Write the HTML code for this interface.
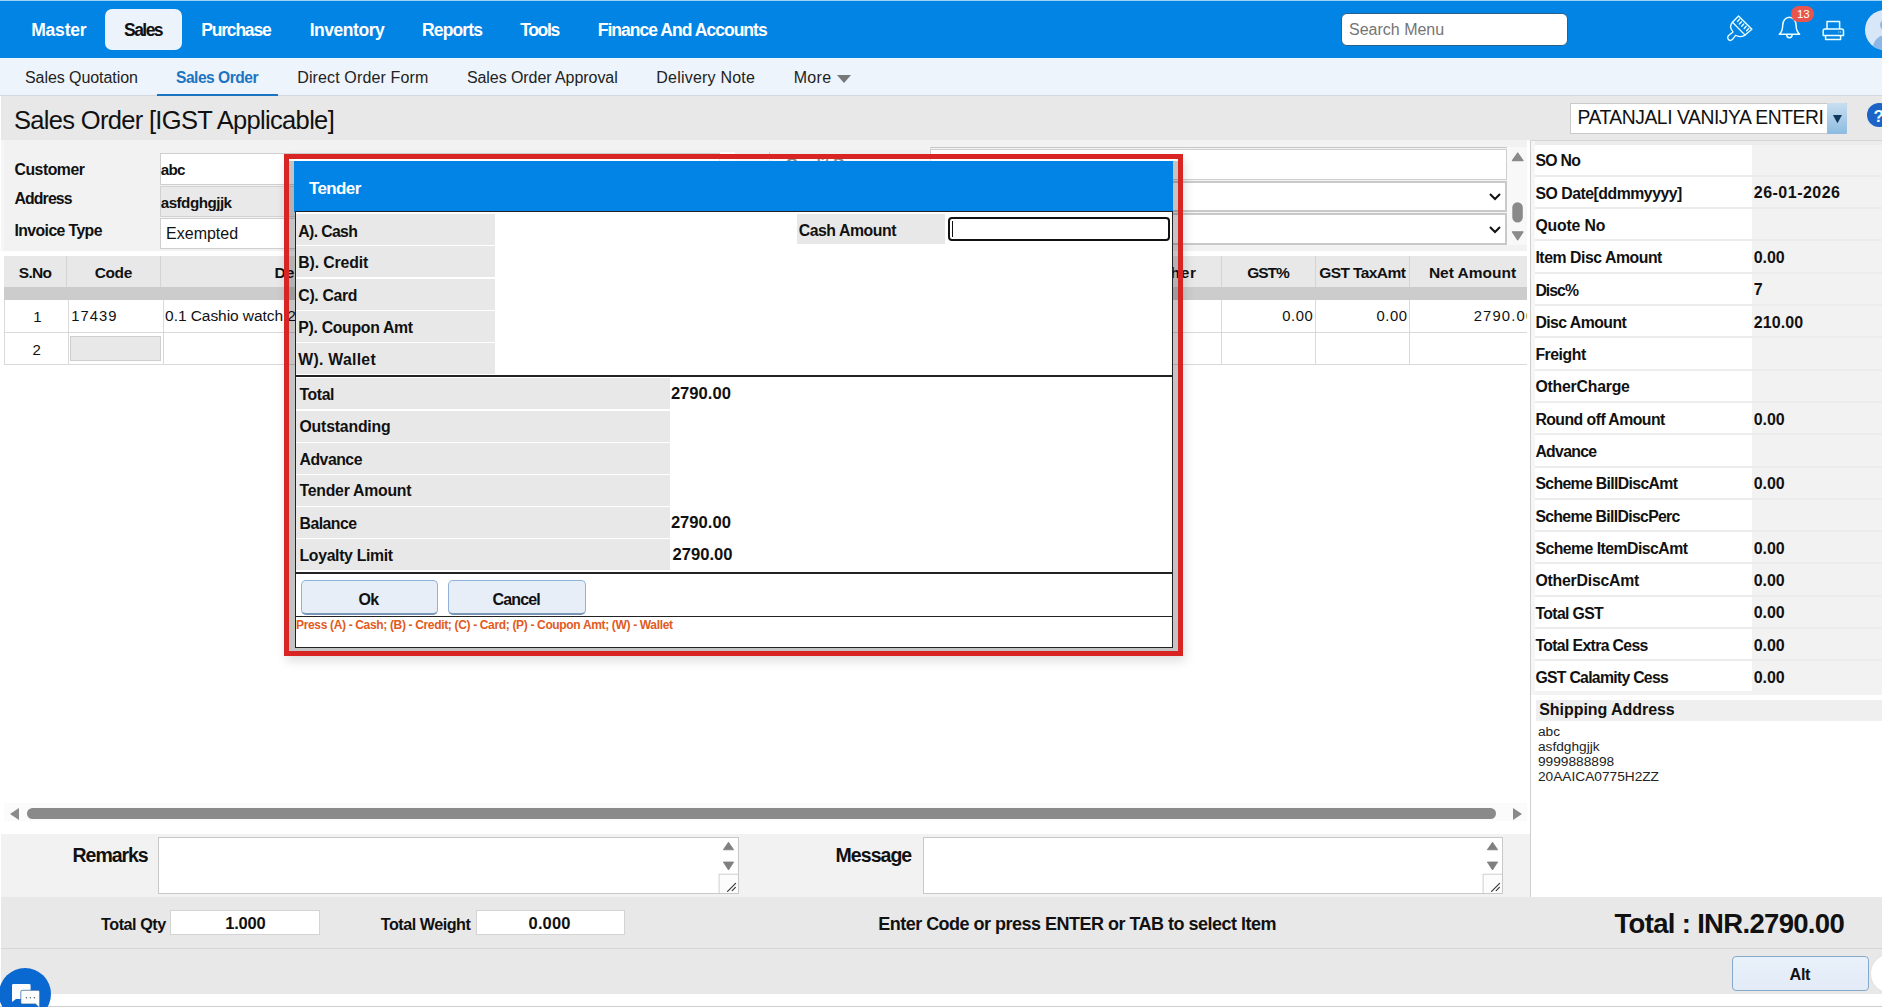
<!DOCTYPE html>
<html><head><meta charset="utf-8"><title>Sales Order</title>
<style>
html,body{margin:0;padding:0;width:1882px;height:1007px;overflow:hidden;background:#fff;}
body{position:relative;font-family:"Liberation Sans", sans-serif;}
.r{position:absolute;}
.t{position:absolute;line-height:1;white-space:nowrap;}
</style></head><body>
<div class="r" style="left:0px;top:0px;width:1882px;height:1007px;background:#ffffff;"></div>
<div class="r" style="left:0px;top:0px;width:1882px;height:1px;background:#9fd3f5;"></div>
<div class="r" style="left:0px;top:1px;width:1882px;height:57px;background:#0284e5;"></div>
<div class="r" style="left:105px;top:9px;width:77px;height:41px;background:#edf3fa;border-radius:7px;"></div>
<div class="t" style="left:31.20px;top:22.48px;font-size:17.5px;font-weight:bold;color:#ffffff;letter-spacing:-0.188px;">Master</div>
<div class="t" style="left:124.10px;top:22.48px;font-size:17.5px;font-weight:bold;color:#111;letter-spacing:-1.566px;">Sales</div>
<div class="t" style="left:201.30px;top:22.48px;font-size:17.5px;font-weight:bold;color:#ffffff;letter-spacing:-1.205px;">Purchase</div>
<div class="t" style="left:309.70px;top:22.48px;font-size:17.5px;font-weight:bold;color:#ffffff;letter-spacing:-0.469px;">Inventory</div>
<div class="t" style="left:422.00px;top:22.48px;font-size:17.5px;font-weight:bold;color:#ffffff;letter-spacing:-0.858px;">Reports</div>
<div class="t" style="left:520.20px;top:22.48px;font-size:17.5px;font-weight:bold;color:#ffffff;letter-spacing:-1.331px;">Tools</div>
<div class="t" style="left:597.70px;top:22.48px;font-size:17.5px;font-weight:bold;color:#ffffff;letter-spacing:-0.963px;">Finance And Accounts</div>
<div class="r" style="left:1341px;top:12.5px;width:227px;height:33.5px;background:#ffffff;border-radius:6px;box-sizing:border-box;border:1px solid #2a5f8a;"></div>
<div class="t" style="left:1349.00px;top:22.05px;font-size:16px;color:#757575;">Search Menu</div>
<div class="r" style="left:0px;top:58px;width:1882px;height:37px;background:#edf4fb;"></div>
<div class="r" style="left:0px;top:95px;width:1882px;height:1px;background:#d3d9de;"></div>
<div class="t" style="left:25.00px;top:69.85px;font-size:16px;color:#222;letter-spacing:-0.067px;">Sales Quotation</div>
<div class="t" style="left:176.00px;top:70.19px;font-size:15.6px;font-weight:bold;color:#1c74c2;letter-spacing:-0.509px;font-weight:600;">Sales Order</div>
<div class="t" style="left:297.20px;top:69.85px;font-size:16px;color:#222;letter-spacing:0.133px;">Direct Order Form</div>
<div class="t" style="left:466.90px;top:69.85px;font-size:16px;color:#222;letter-spacing:-0.067px;">Sales Order Approval</div>
<div class="t" style="left:656.30px;top:69.85px;font-size:16px;color:#222;letter-spacing:0.208px;">Delivery Note</div>
<div class="t" style="left:793.70px;top:69.85px;font-size:16px;color:#222;letter-spacing:0.307px;">More</div>
<div class="r" style="left:157px;top:93.5px;width:121px;height:2.5px;background:#1b74c2;"></div>
<svg class="r" style="left:836px;top:74px;width:16px;height:10px" viewBox="0 0 16 10"><path d="M1 1 L15 1 L8 9 Z" fill="#777"/></svg>
<div class="r" style="left:1px;top:96px;width:1881px;height:44px;background:#e8e8e8;"></div>
<div class="t" style="left:13.90px;top:107.50px;font-size:25.5px;color:#111;letter-spacing:-0.674px;">Sales Order [IGST Applicable]</div>
<div class="r" style="left:1570px;top:103px;width:277px;height:31px;background:#ffffff;box-sizing:border-box;border:1px solid #c9c9c9;"></div>
<div class="t" style="left:1577.40px;top:108.25px;font-size:19.3px;color:#111;letter-spacing:-0.434px;">PATANJALI VANIJYA ENTERI</div>
<div class="r" style="left:1827.4px;top:103px;width:19.2px;height:30.6px;background:linear-gradient(#c8def0,#8dbbe0);border-radius:0 2px 2px 0;"></div>
<svg class="r" style="left:1832px;top:114px;width:11px;height:10px" viewBox="0 0 11 10"><path d="M0.9 1 L10 1 L5.45 9.3 Z" fill="#0f3a5e"/></svg>
<div class="r" style="left:1867.2px;top:102.6px;width:24.4px;height:24.4px;border-radius:50%;background:#1b63c6;"></div>
<div class="t" style="left:1873.50px;top:107.60px;font-size:17px;font-weight:bold;color:#eaffff;">?</div>
<div class="r" style="left:1px;top:140px;width:1529px;height:757px;background:#ffffff;"></div>
<div class="r" style="left:1px;top:140px;width:4px;height:111px;background:#f6f6f6;"></div>
<div class="r" style="left:4px;top:140px;width:1523px;height:111px;background:#f2f2f2;"></div>
<div class="t" style="left:14.50px;top:161.82px;font-size:15.8px;font-weight:bold;color:#111;letter-spacing:-0.484px;">Customer</div>
<div class="t" style="left:14.50px;top:191.02px;font-size:15.8px;font-weight:bold;color:#111;letter-spacing:-0.867px;">Address</div>
<div class="t" style="left:14.50px;top:222.52px;font-size:15.8px;font-weight:bold;color:#111;letter-spacing:-0.597px;">Invoice Type</div>
<div class="r" style="left:160px;top:153px;width:560px;height:32px;background:#ffffff;box-sizing:border-box;border:1px solid #cfcfcf;"></div>
<div class="r" style="left:160px;top:186px;width:560px;height:31px;background:#e9e9e9;box-sizing:border-box;border:1px solid #d2d2d2;"></div>
<div class="r" style="left:160px;top:218px;width:560px;height:31px;background:#ffffff;box-sizing:border-box;border:1px solid #cfcfcf;"></div>
<div class="t" style="left:160.70px;top:161.93px;font-size:15.2px;font-weight:bold;color:#111;letter-spacing:-0.71px;">abc</div>
<div class="t" style="left:160.70px;top:194.63px;font-size:15.2px;font-weight:bold;color:#111;letter-spacing:-0.508px;">asfdghgjjk</div>
<div class="t" style="left:166.10px;top:225.55px;font-size:16px;color:#111;letter-spacing:-0.011px;">Exempted</div>
<div class="r" style="left:720px;top:152px;width:15px;height:96px;background:#ffffff;"></div>
<div class="r" style="left:769px;top:152px;width:1px;height:96px;background:#d0d0d0;"></div>
<div class="t" style="left:786.00px;top:157.12px;font-size:15.8px;font-weight:bold;color:#111;letter-spacing:-0.385px;">Credit Days</div>
<div class="t" style="left:932.50px;top:157.45px;font-size:16px;color:#111;">0</div>
<div class="r" style="left:930px;top:146.5px;width:577px;height:1.5px;background:#c8c8c8;"></div>
<div class="r" style="left:930px;top:148.5px;width:577px;height:31.5px;background:#ffffff;box-sizing:border-box;border:1px solid #cfcfcf;"></div>
<div class="r" style="left:930px;top:181px;width:577px;height:31px;background:#ffffff;box-sizing:border-box;border:2px solid #c9c9c9;"></div>
<div class="r" style="left:930px;top:212.8px;width:577px;height:32px;background:#ffffff;box-sizing:border-box;border:2px solid #c9c9c9;"></div>
<svg class="r" style="left:1488px;top:192px;width:14px;height:10px" viewBox="0 0 14 10"><path d="M2 2 L7 7 L12 2" fill="none" stroke="#111" stroke-width="2"/></svg>
<svg class="r" style="left:1488px;top:225px;width:14px;height:10px" viewBox="0 0 14 10"><path d="M2 2 L7 7 L12 2" fill="none" stroke="#111" stroke-width="2"/></svg>
<div class="r" style="left:1507px;top:147px;width:20px;height:98px;background:#f8f8f8;"></div>
<svg class="r" style="left:1510px;top:150px;width:16px;height:97px" viewBox="0 0 16 97"><path d="M2.4 10.6 L13 10.6 L7.7 3 Z" fill="#8a8a8a" stroke="#8a8a8a" stroke-width="1.2" stroke-linejoin="round"/><rect x="2.3" y="52.2" width="10.5" height="20.2" rx="5.2" fill="#8a8a8a"/><path d="M2.4 81.8 L13 81.8 L7.7 89.8 Z" fill="#8a8a8a" stroke="#8a8a8a" stroke-width="1.2" stroke-linejoin="round"/></svg>
<div class="r" style="left:4px;top:256px;width:1523px;height:31px;background:#e8e8e8;"></div>
<div class="r" style="left:4px;top:287px;width:1523px;height:13px;background:#cccccc;"></div>
<div class="r" style="left:66px;top:256px;width:1px;height:31px;background:#d4d4d4;"></div>
<div class="r" style="left:160px;top:256px;width:1px;height:31px;background:#d4d4d4;"></div>
<div class="r" style="left:1221px;top:256px;width:1px;height:31px;background:#d4d4d4;"></div>
<div class="r" style="left:1315px;top:256px;width:1px;height:31px;background:#d4d4d4;"></div>
<div class="r" style="left:1409px;top:256px;width:1px;height:31px;background:#d4d4d4;"></div>
<div class="r" style="left:4px;top:300px;width:1523px;height:64px;background:#ffffff;"></div>
<div class="r" style="left:4px;top:332px;width:1523px;height:1px;background:#d9d9d9;"></div>
<div class="r" style="left:4px;top:364px;width:1523px;height:1px;background:#d9d9d9;"></div>
<div class="r" style="left:4px;top:300px;width:1px;height:65px;background:#d9d9d9;"></div>
<div class="r" style="left:68px;top:300px;width:1px;height:64px;background:#d9d9d9;"></div>
<div class="r" style="left:163px;top:300px;width:1px;height:64px;background:#d9d9d9;"></div>
<div class="r" style="left:1221px;top:300px;width:1px;height:64px;background:#d9d9d9;"></div>
<div class="r" style="left:1315px;top:300px;width:1px;height:64px;background:#d9d9d9;"></div>
<div class="r" style="left:1409px;top:300px;width:1px;height:64px;background:#d9d9d9;"></div>
<div class="t" style="left:18.80px;top:264.87px;font-size:15.5px;font-weight:bold;color:#111;letter-spacing:-0.713px;">S.No</div>
<div class="t" style="left:94.80px;top:264.87px;font-size:15.5px;font-weight:bold;color:#111;letter-spacing:-0.417px;">Code</div>
<div class="t" style="left:274.40px;top:264.87px;font-size:15.5px;font-weight:bold;color:#111;letter-spacing:0.275px;">Description</div>
<div class="t" style="left:1152.00px;top:264.87px;font-size:15.5px;font-weight:bold;color:#111;letter-spacing:0.673px;">Other</div>
<div class="t" style="left:1247.30px;top:264.87px;font-size:15.5px;font-weight:bold;color:#111;letter-spacing:-1.083px;">GST%</div>
<div class="t" style="left:1319.30px;top:264.87px;font-size:15.5px;font-weight:bold;color:#111;letter-spacing:-0.593px;">GST TaxAmt</div>
<div class="t" style="left:1428.90px;top:264.87px;font-size:15.5px;font-weight:bold;color:#111;letter-spacing:0.004px;">Net Amount</div>
<div class="t" style="left:33.20px;top:308.80px;font-size:15px;color:#111;">1</div>
<div class="t" style="left:71.30px;top:308.96px;font-size:14.8px;color:#111;letter-spacing:1.014px;">17439</div>
<div class="t" style="left:165.10px;top:308.37px;font-size:15.5px;color:#111;letter-spacing:-0.059px;">0.1 Cashio watch 2</div>
<div class="t" style="left:1282.20px;top:308.96px;font-size:14.8px;color:#111;letter-spacing:0.571px;">0.00</div>
<div class="t" style="left:1376.50px;top:308.96px;font-size:14.8px;color:#111;letter-spacing:0.571px;">0.00</div>
<div class="t" style="left:1473.70px;top:308.96px;font-size:14.8px;color:#111;letter-spacing:1.166px;">2790.00</div>
<div class="r" style="left:1527px;top:296px;width:3px;height:70px;background:#ffffff;"></div>
<div class="t" style="left:32.40px;top:341.50px;font-size:15px;color:#111;">2</div>
<div class="r" style="left:70px;top:336px;width:91px;height:25px;background:#e8e8e8;box-sizing:border-box;border:1px solid #cfcfcf;"></div>
<div class="r" style="left:4px;top:803px;width:1523px;height:18px;background:#fbfbfb;"></div>
<svg class="r" style="left:8px;top:807px;width:14px;height:14px" viewBox="0 0 14 14"><path d="M11 1 L11 13 L2 7 Z" fill="#8a8a8a"/></svg>
<div class="r" style="left:27px;top:808px;width:1469px;height:11px;background:#8a8a8a;border-radius:6px;"></div>
<svg class="r" style="left:1510px;top:807px;width:14px;height:14px" viewBox="0 0 14 14"><path d="M3 1 L3 13 L12 7 Z" fill="#8a8a8a"/></svg>
<div class="r" style="left:1px;top:834px;width:1529px;height:63px;background:#f2f2f2;"></div>
<div class="t" style="left:72.60px;top:845.78px;font-size:19.5px;font-weight:bold;color:#111;letter-spacing:-1.065px;">Remarks</div>
<div class="r" style="left:158px;top:837px;width:581px;height:57px;background:#ffffff;box-sizing:border-box;border:1px solid #c8c8c8;"></div>
<div class="t" style="left:835.60px;top:845.78px;font-size:19.5px;font-weight:bold;color:#111;letter-spacing:-0.965px;">Message</div>
<div class="r" style="left:922.5px;top:837px;width:580.5px;height:57px;background:#ffffff;box-sizing:border-box;border:1px solid #c8c8c8;"></div>
<svg class="r" style="left:718px;top:839px;width:20px;height:54px" viewBox="0 0 20 54"><path d="M5.3 10.8 L15.7 10.8 L10.5 3.2 Z" fill="#7f7f7f" stroke="#7f7f7f" stroke-width="0.8" stroke-linejoin="round"/><path d="M5.3 23 L15.7 23 L10.5 31 Z" fill="#7f7f7f" stroke="#7f7f7f" stroke-width="0.8" stroke-linejoin="round"/><rect x="1.1" y="35.2" width="25" height="25" fill="#fcfcfc" stroke="#cfcfcf" stroke-width="1"/><path d="M9.6 52.3 L17.6 44.3 M14.2 51.6 L17.4 48.4" stroke="#3a3a3a" stroke-width="1.2" stroke-linecap="round"/></svg>
<svg class="r" style="left:1482.2px;top:839px;width:20px;height:54px" viewBox="0 0 20 54"><path d="M5.3 10.8 L15.7 10.8 L10.5 3.2 Z" fill="#7f7f7f" stroke="#7f7f7f" stroke-width="0.8" stroke-linejoin="round"/><path d="M5.3 23 L15.7 23 L10.5 31 Z" fill="#7f7f7f" stroke="#7f7f7f" stroke-width="0.8" stroke-linejoin="round"/><rect x="1.1" y="35.2" width="25" height="25" fill="#fcfcfc" stroke="#cfcfcf" stroke-width="1"/><path d="M9.6 52.3 L17.6 44.3 M14.2 51.6 L17.4 48.4" stroke="#3a3a3a" stroke-width="1.2" stroke-linecap="round"/></svg>
<div class="r" style="left:1530px;top:140px;width:352px;height:757px;background:#ffffff;box-sizing:border-box;border-left:1px solid #cfcfcf;border-top:1px solid #d6d6d6;"></div>
<div class="r" style="left:1531px;top:141px;width:351px;height:554px;background:#ececec;"></div>
<div class="r" style="left:1534.5px;top:144.5px;width:217.2px;height:30.4px;background:#ffffff;"></div>
<div class="r" style="left:1751.7px;top:144.5px;width:131px;height:30.4px;background:#f2f2f2;"></div>
<div class="t" style="left:1535.40px;top:153.32px;font-size:15.8px;font-weight:bold;color:#111;letter-spacing:-0.667px;">SO No</div>
<div class="r" style="left:1534.5px;top:176.8px;width:217.2px;height:30.4px;background:#ffffff;"></div>
<div class="r" style="left:1751.7px;top:176.8px;width:131px;height:30.4px;background:#f2f2f2;"></div>
<div class="t" style="left:1535.40px;top:185.62px;font-size:15.8px;font-weight:bold;color:#111;letter-spacing:-0.47px;">SO Date[ddmmyyyy]</div>
<div class="t" style="left:1753.80px;top:185.45px;font-size:16px;font-weight:bold;color:#111;letter-spacing:0.484px;">26-01-2026</div>
<div class="r" style="left:1534.5px;top:209.1px;width:217.2px;height:30.4px;background:#ffffff;"></div>
<div class="r" style="left:1751.7px;top:209.1px;width:131px;height:30.4px;background:#f2f2f2;"></div>
<div class="t" style="left:1535.40px;top:217.92px;font-size:15.8px;font-weight:bold;color:#111;letter-spacing:-0.157px;">Quote No</div>
<div class="r" style="left:1534.5px;top:241.4px;width:217.2px;height:30.4px;background:#ffffff;"></div>
<div class="r" style="left:1751.7px;top:241.4px;width:131px;height:30.4px;background:#f2f2f2;"></div>
<div class="t" style="left:1535.40px;top:250.22px;font-size:15.8px;font-weight:bold;color:#111;letter-spacing:-0.45px;">Item Disc Amount</div>
<div class="t" style="left:1753.80px;top:250.05px;font-size:16px;font-weight:bold;color:#111;letter-spacing:-0.107px;">0.00</div>
<div class="r" style="left:1534.5px;top:273.7px;width:217.2px;height:30.4px;background:#ffffff;"></div>
<div class="r" style="left:1751.7px;top:273.7px;width:131px;height:30.4px;background:#f2f2f2;"></div>
<div class="t" style="left:1535.40px;top:282.52px;font-size:15.8px;font-weight:bold;color:#111;letter-spacing:-0.95px;">Disc%</div>
<div class="t" style="left:1753.80px;top:282.35px;font-size:16px;font-weight:bold;color:#111;">7</div>
<div class="r" style="left:1534.5px;top:306.0px;width:217.2px;height:30.4px;background:#ffffff;"></div>
<div class="r" style="left:1751.7px;top:306.0px;width:131px;height:30.4px;background:#f2f2f2;"></div>
<div class="t" style="left:1535.40px;top:314.82px;font-size:15.8px;font-weight:bold;color:#111;letter-spacing:-0.545px;">Disc Amount</div>
<div class="t" style="left:1753.80px;top:314.65px;font-size:16px;font-weight:bold;color:#111;letter-spacing:0.068px;">210.00</div>
<div class="r" style="left:1534.5px;top:338.3px;width:217.2px;height:30.4px;background:#ffffff;"></div>
<div class="r" style="left:1751.7px;top:338.3px;width:131px;height:30.4px;background:#f2f2f2;"></div>
<div class="t" style="left:1535.40px;top:347.12px;font-size:15.8px;font-weight:bold;color:#111;letter-spacing:-0.46px;">Freight</div>
<div class="r" style="left:1534.5px;top:370.6px;width:217.2px;height:30.4px;background:#ffffff;"></div>
<div class="r" style="left:1751.7px;top:370.6px;width:131px;height:30.4px;background:#f2f2f2;"></div>
<div class="t" style="left:1535.40px;top:379.42px;font-size:15.8px;font-weight:bold;color:#111;letter-spacing:-0.204px;">OtherCharge</div>
<div class="r" style="left:1534.5px;top:402.9px;width:217.2px;height:30.4px;background:#ffffff;"></div>
<div class="r" style="left:1751.7px;top:402.9px;width:131px;height:30.4px;background:#f2f2f2;"></div>
<div class="t" style="left:1535.40px;top:411.72px;font-size:15.8px;font-weight:bold;color:#111;letter-spacing:-0.539px;">Round off Amount</div>
<div class="t" style="left:1753.80px;top:411.55px;font-size:16px;font-weight:bold;color:#111;letter-spacing:-0.107px;">0.00</div>
<div class="r" style="left:1534.5px;top:435.2px;width:217.2px;height:30.4px;background:#ffffff;"></div>
<div class="r" style="left:1751.7px;top:435.2px;width:131px;height:30.4px;background:#f2f2f2;"></div>
<div class="t" style="left:1535.40px;top:444.02px;font-size:15.8px;font-weight:bold;color:#111;letter-spacing:-0.681px;">Advance</div>
<div class="r" style="left:1534.5px;top:467.5px;width:217.2px;height:30.4px;background:#ffffff;"></div>
<div class="r" style="left:1751.7px;top:467.5px;width:131px;height:30.4px;background:#f2f2f2;"></div>
<div class="t" style="left:1535.40px;top:476.32px;font-size:15.8px;font-weight:bold;color:#111;letter-spacing:-0.65px;">Scheme BillDiscAmt</div>
<div class="t" style="left:1753.80px;top:476.15px;font-size:16px;font-weight:bold;color:#111;letter-spacing:-0.107px;">0.00</div>
<div class="r" style="left:1534.5px;top:499.8px;width:217.2px;height:30.4px;background:#ffffff;"></div>
<div class="r" style="left:1751.7px;top:499.8px;width:131px;height:30.4px;background:#f2f2f2;"></div>
<div class="t" style="left:1535.40px;top:508.62px;font-size:15.8px;font-weight:bold;color:#111;letter-spacing:-0.678px;">Scheme BillDiscPerc</div>
<div class="r" style="left:1534.5px;top:532.1px;width:217.2px;height:30.4px;background:#ffffff;"></div>
<div class="r" style="left:1751.7px;top:532.1px;width:131px;height:30.4px;background:#f2f2f2;"></div>
<div class="t" style="left:1535.40px;top:540.92px;font-size:15.8px;font-weight:bold;color:#111;letter-spacing:-0.527px;">Scheme ItemDiscAmt</div>
<div class="t" style="left:1753.80px;top:540.75px;font-size:16px;font-weight:bold;color:#111;letter-spacing:-0.107px;">0.00</div>
<div class="r" style="left:1534.5px;top:564.4px;width:217.2px;height:30.4px;background:#ffffff;"></div>
<div class="r" style="left:1751.7px;top:564.4px;width:131px;height:30.4px;background:#f2f2f2;"></div>
<div class="t" style="left:1535.40px;top:573.22px;font-size:15.8px;font-weight:bold;color:#111;letter-spacing:-0.205px;">OtherDiscAmt</div>
<div class="t" style="left:1753.80px;top:573.05px;font-size:16px;font-weight:bold;color:#111;letter-spacing:-0.107px;">0.00</div>
<div class="r" style="left:1534.5px;top:596.7px;width:217.2px;height:30.4px;background:#ffffff;"></div>
<div class="r" style="left:1751.7px;top:596.7px;width:131px;height:30.4px;background:#f2f2f2;"></div>
<div class="t" style="left:1535.40px;top:605.52px;font-size:15.8px;font-weight:bold;color:#111;letter-spacing:-0.634px;">Total GST</div>
<div class="t" style="left:1753.80px;top:605.35px;font-size:16px;font-weight:bold;color:#111;letter-spacing:-0.107px;">0.00</div>
<div class="r" style="left:1534.5px;top:629.0px;width:217.2px;height:30.4px;background:#ffffff;"></div>
<div class="r" style="left:1751.7px;top:629.0px;width:131px;height:30.4px;background:#f2f2f2;"></div>
<div class="t" style="left:1535.40px;top:637.82px;font-size:15.8px;font-weight:bold;color:#111;letter-spacing:-0.641px;">Total Extra Cess</div>
<div class="t" style="left:1753.80px;top:637.65px;font-size:16px;font-weight:bold;color:#111;letter-spacing:-0.107px;">0.00</div>
<div class="r" style="left:1534.5px;top:661.3px;width:217.2px;height:30.4px;background:#ffffff;"></div>
<div class="r" style="left:1751.7px;top:661.3px;width:131px;height:30.4px;background:#f2f2f2;"></div>
<div class="t" style="left:1535.40px;top:670.12px;font-size:15.8px;font-weight:bold;color:#111;letter-spacing:-0.718px;">GST Calamity Cess</div>
<div class="t" style="left:1753.80px;top:669.95px;font-size:16px;font-weight:bold;color:#111;letter-spacing:-0.107px;">0.00</div>
<div class="r" style="left:1531px;top:691px;width:351px;height:4px;background:#f2f2f2;"></div>
<div class="r" style="left:1531px;top:141px;width:3.5px;height:554px;background:#f6f6f6;"></div>
<div class="r" style="left:1536px;top:700px;width:346px;height:21px;background:#efefef;"></div>
<div class="t" style="left:1539.20px;top:702.05px;font-size:16px;font-weight:bold;color:#111;letter-spacing:-0.048px;">Shipping Address</div>
<div class="t" style="left:1538.00px;top:724.70px;font-size:13.7px;color:#222;">abc</div>
<div class="t" style="left:1538.00px;top:739.93px;font-size:13.7px;color:#222;">asfdghgjjk</div>
<div class="t" style="left:1538.00px;top:755.16px;font-size:13.7px;color:#222;">9999888898</div>
<div class="t" style="left:1538.00px;top:770.39px;font-size:13.7px;color:#222;">20AAICA0775H2ZZ</div>
<div class="r" style="left:1px;top:897px;width:1881px;height:51px;background:#e8e8e8;"></div>
<div class="r" style="left:1px;top:948px;width:1881px;height:1px;background:#d5d5d5;"></div>
<div class="r" style="left:1px;top:949px;width:1881px;height:45px;background:#e8e8e8;"></div>
<div class="r" style="left:0px;top:1006px;width:1882px;height:1px;background:#cfcfcf;"></div>
<div class="t" style="left:101.00px;top:915.58px;font-size:16.2px;font-weight:bold;color:#111;letter-spacing:-0.464px;">Total Qty</div>
<div class="r" style="left:170px;top:910px;width:150px;height:25px;background:#ffffff;box-sizing:border-box;border:1px solid #d4d4d4;"></div>
<div class="t" style="left:225.20px;top:915.32px;font-size:16.5px;font-weight:bold;color:#111;letter-spacing:-0.208px;">1.000</div>
<div class="t" style="left:380.80px;top:915.58px;font-size:16.2px;font-weight:bold;color:#111;letter-spacing:-0.506px;">Total Weight</div>
<div class="r" style="left:476px;top:910px;width:149px;height:25px;background:#ffffff;box-sizing:border-box;border:1px solid #d4d4d4;"></div>
<div class="t" style="left:528.60px;top:915.32px;font-size:16.5px;font-weight:bold;color:#111;letter-spacing:0.117px;">0.000</div>
<div class="t" style="left:878.20px;top:915.25px;font-size:18px;font-weight:bold;color:#111;letter-spacing:-0.512px;">Enter Code or press ENTER or TAB to select Item</div>
<div class="t" style="left:1614.50px;top:910.31px;font-size:27.5px;font-weight:bold;color:#111;letter-spacing:-0.681px;">Total : INR.2790.00</div>
<div class="r" style="left:1732px;top:956px;width:137px;height:35px;background:linear-gradient(#e9f1fb,#e2ebf6);box-sizing:border-box;border:1px solid #86a9cb;border-radius:4px;"></div>
<div class="t" style="left:1789.60px;top:965.99px;font-size:16.3px;font-weight:bold;color:#111;letter-spacing:-0.38px;">Alt</div>
<div class="r" style="left:1870.6px;top:954px;width:39px;height:39px;border-radius:50%;background:#fff;box-shadow:0 0 2px rgba(0,0,0,0.08);"></div>
<div class="r" style="left:-0.7px;top:967.5px;width:52px;height:52px;border-radius:50%;background:#0a69d1;"></div>
<svg class="r" style="left:0px;top:960px;width:60px;height:47px" viewBox="0 960 60 47"><path d="M13.4 984 H29.2 Q30.6 984 30.6 985.4 V999 H16 L12 1002 V985.4 Q12 984 13.4 984 Z" fill="#fbfdff"/><path d="M22.3 990.3 H38.2 Q39.7 990.3 39.7 991.8 V1008 L35.5 1004 H22.3 Q20.8 1004 20.8 1002.5 V991.8 Q20.8 990.3 22.3 990.3 Z" fill="#fbfdff" stroke="#2a5d99" stroke-width="0.7"/><circle cx="26.4" cy="997.8" r="0.7" fill="#555"/><circle cx="30.3" cy="997.8" r="0.7" fill="#555"/><circle cx="34.3" cy="997.8" r="0.7" fill="#555"/></svg>
<svg class="r" style="left:1720px;top:10px;width:40px;height:38px" viewBox="0 0 40 38" fill="none" stroke="#eaffff" stroke-width="1.35" stroke-linejoin="round" stroke-linecap="round"><path d="M12.5 12.3 L18.5 6 L31.9 19.2 L25.1 25.1 Z"/><path d="M12.5 12.3 C 9.6 15.2, 10.2 18.5, 13 21.9 L 8.6 25.6 A 2.7 2.7 0 0 0 12.3 29.6 L 15.6 25.3 C 18.5 26.6, 21.5 28.2, 25.1 25.1"/><path d="M17.5 11.5 L19.6 9.2 M19.4 14 L21.5 11.7 M21.7 16.2 L23.8 14 M24.2 18.5 L26.2 16.2 M26.6 20.8 L28.7 18.5"/></svg>
<svg class="r" style="left:1776px;top:14px;width:28px;height:28px" viewBox="0 0 28 28" fill="none" stroke="#eaffff" stroke-width="1.5" stroke-linejoin="round"><path d="M3.3 20.3 C 5.5 18.2, 6.7 15.8, 6.7 11.2 A 6.7 8 0 0 1 20.1 11.2 C 20.1 15.8, 21.4 18.2, 23.6 20.3 Z"/><path d="M10.7 20.6 A 2.7 3.2 0 0 0 16.1 20.6"/></svg>
<div class="r" style="left:1791.2px;top:6.3px;width:22.6px;height:15.3px;border-radius:8px;background:#e8554e;"></div>
<div class="t" style="left:1797.00px;top:9.46px;font-size:11.5px;color:#fff;letter-spacing:-0.165px;">13</div>
<svg class="r" style="left:1820px;top:18px;width:26px;height:24px" viewBox="0 0 26 24" fill="none" stroke="#eaffff" stroke-width="1.5" stroke-linejoin="round"><path d="M7 11 V3.5 H19.6 V11"/><path d="M5 11 H21.7 A1.8 1.8 0 0 1 23.5 12.8 V17.6 H3.2 V12.8 A1.8 1.8 0 0 1 5 11 Z"/><path d="M5.6 17.6 V21.5 H20.6 V17.6"/><path d="M18.4 14 H19.2 M20.2 14 H21" stroke-width="1.1"/></svg>
<div class="r" style="left:1865px;top:9.5px;width:40.5px;height:40.5px;border-radius:50%;background:#d8e7f7;overflow:hidden;"><div style="position:absolute;left:14.5px;top:9.5px;width:12px;height:12px;border-radius:50%;background:#8db8e6;"></div><div style="position:absolute;left:8px;top:25.5px;width:26px;height:26px;border-radius:50%;background:#8db8e6;"></div></div>
<div class="r" style="left:284px;top:154px;width:899px;height:502px;background:transparent;box-sizing:border-box;border:5px solid #d92424;box-shadow:2px 5px 10px rgba(0,0,0,0.13);"></div>
<div class="r" style="left:289px;top:161px;width:889px;height:490px;background:rgba(0,0,0,0.23);"></div>
<div class="r" style="left:289px;top:159px;width:889px;height:2px;background:rgba(255,255,255,0.5);"></div>
<div class="r" style="left:294px;top:161px;width:879px;height:51px;background:#0184e6;"></div>
<div class="t" style="left:308.90px;top:180.10px;font-size:17px;font-weight:bold;color:#fff;letter-spacing:-0.604px;">Tender</div>
<div class="r" style="left:295px;top:211px;width:878px;height:437px;background:#ffffff;box-sizing:border-box;border:1.5px solid #222;"></div>
<div class="r" style="left:296px;top:213.7px;width:199px;height:31px;background:#e8e8e8;"></div>
<div class="t" style="left:298.30px;top:223.92px;font-size:15.8px;font-weight:bold;color:#111;letter-spacing:-0.638px;">A). Cash</div>
<div class="r" style="left:296px;top:246px;width:199px;height:31px;background:#e8e8e8;"></div>
<div class="t" style="left:298.30px;top:255.22px;font-size:15.8px;font-weight:bold;color:#111;letter-spacing:-0.133px;">B). Credit</div>
<div class="r" style="left:296px;top:279px;width:199px;height:31px;background:#e8e8e8;"></div>
<div class="t" style="left:298.30px;top:288.22px;font-size:15.8px;font-weight:bold;color:#111;letter-spacing:-0.323px;">C). Card</div>
<div class="r" style="left:296px;top:311px;width:199px;height:31px;background:#e8e8e8;"></div>
<div class="t" style="left:298.30px;top:320.42px;font-size:15.8px;font-weight:bold;color:#111;letter-spacing:-0.303px;">P). Coupon Amt</div>
<div class="r" style="left:296px;top:343px;width:199px;height:31px;background:#e8e8e8;"></div>
<div class="t" style="left:298.30px;top:352.22px;font-size:15.8px;font-weight:bold;color:#111;letter-spacing:0.279px;">W). Wallet</div>
<div class="r" style="left:797px;top:214px;width:148px;height:30px;background:#e8e8e8;"></div>
<div class="t" style="left:798.70px;top:222.62px;font-size:15.8px;font-weight:bold;color:#111;letter-spacing:-0.435px;">Cash Amount</div>
<div class="r" style="left:948px;top:217px;width:222px;height:24px;background:#ffffff;box-sizing:border-box;border:2px solid #111;border-radius:4px;"></div>
<div class="r" style="left:952px;top:221px;width:1px;height:16px;background:#111;"></div>
<div class="r" style="left:296px;top:375px;width:876px;height:1.5px;background:#222;"></div>
<div class="r" style="left:296px;top:378px;width:374px;height:31px;background:#e8e8e8;"></div>
<div class="t" style="left:299.50px;top:386.82px;font-size:15.8px;font-weight:bold;color:#111;letter-spacing:-0.394px;">Total</div>
<div class="t" style="left:670.90px;top:386.14px;font-size:16.6px;font-weight:bold;color:#111;letter-spacing:-0.002px;">2790.00</div>
<div class="r" style="left:296px;top:411px;width:374px;height:31px;background:#e8e8e8;"></div>
<div class="t" style="left:299.50px;top:419.22px;font-size:15.8px;font-weight:bold;color:#111;letter-spacing:-0.186px;">Outstanding</div>
<div class="r" style="left:296px;top:443px;width:374px;height:31px;background:#e8e8e8;"></div>
<div class="t" style="left:299.50px;top:451.72px;font-size:15.8px;font-weight:bold;color:#111;letter-spacing:-0.481px;">Advance</div>
<div class="r" style="left:296px;top:475px;width:374px;height:31px;background:#e8e8e8;"></div>
<div class="t" style="left:299.50px;top:483.02px;font-size:15.8px;font-weight:bold;color:#111;letter-spacing:-0.244px;">Tender Amount</div>
<div class="r" style="left:296px;top:507px;width:374px;height:31px;background:#e8e8e8;"></div>
<div class="t" style="left:299.50px;top:515.52px;font-size:15.8px;font-weight:bold;color:#111;letter-spacing:-0.516px;">Balance</div>
<div class="t" style="left:670.90px;top:514.84px;font-size:16.6px;font-weight:bold;color:#111;letter-spacing:-0.002px;">2790.00</div>
<div class="r" style="left:296px;top:539px;width:374px;height:31px;background:#e8e8e8;"></div>
<div class="t" style="left:299.50px;top:548.02px;font-size:15.8px;font-weight:bold;color:#111;letter-spacing:-0.316px;">Loyalty Limit</div>
<div class="t" style="left:672.60px;top:547.34px;font-size:16.6px;font-weight:bold;color:#111;letter-spacing:-0.002px;">2790.00</div>
<div class="r" style="left:296px;top:572px;width:876px;height:1.5px;background:#222;"></div>
<div class="r" style="left:301px;top:580px;width:137px;height:35px;background:#e8eef8;box-sizing:border-box;border:1px solid #8fb3d8;border-bottom:2px solid #7896b6;border-radius:5px;"></div>
<div class="r" style="left:448px;top:580px;width:138px;height:35px;background:#e8eef8;box-sizing:border-box;border:1px solid #8fb3d8;border-bottom:2px solid #7896b6;border-radius:5px;"></div>
<div class="t" style="left:358.60px;top:591.65px;font-size:16px;font-weight:bold;color:#111;letter-spacing:-0.74px;">Ok</div>
<div class="t" style="left:492.60px;top:591.65px;font-size:16px;font-weight:bold;color:#111;letter-spacing:-0.896px;">Cancel</div>
<div class="r" style="left:296px;top:615.5px;width:876px;height:1.5px;background:#222;"></div>
<div class="t" style="left:296.00px;top:619.34px;font-size:12px;font-weight:bold;color:#e25a22;letter-spacing:-0.339px;">Press (A) - Cash; (B) - Credit; (C) - Card; (P) - Coupon Amt; (W) - Wallet</div>
</body></html>
